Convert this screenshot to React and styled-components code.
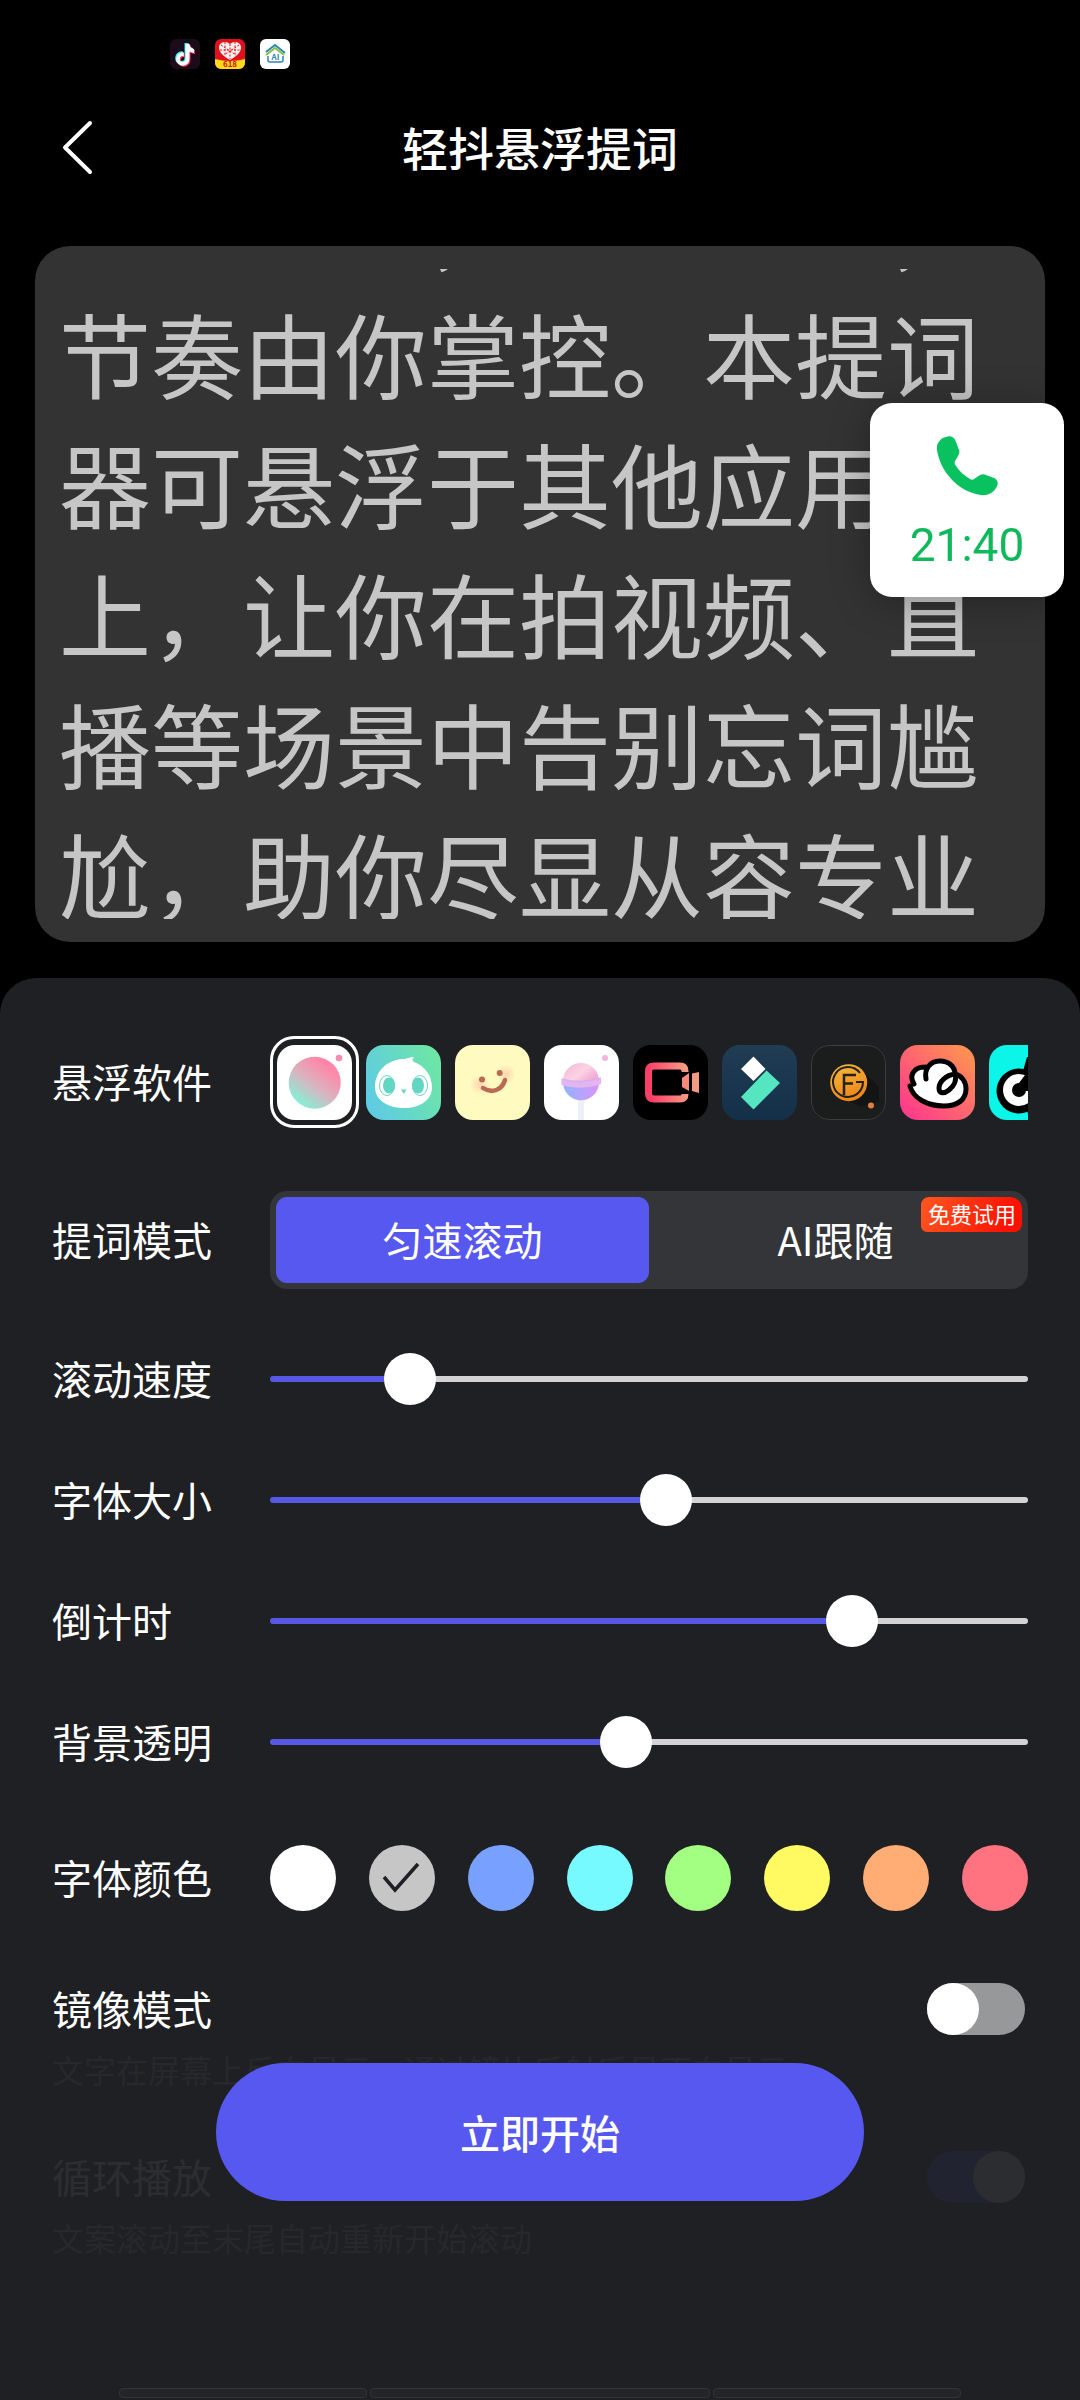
import React, { useState } from 'react';
import styled, { createGlobalStyle } from 'styled-components';

const GlobalStyle = createGlobalStyle`
    * {
        box-sizing: border-box;
    }

    body {
        margin: 0;
        background: #000;
        color: #fff;
        font-family: "Noto Sans CJK SC", "Noto Sans", sans-serif;
    }

    button, input {
        margin: 0;
        padding: 0;
        border: none;
        font-family: inherit;
        color: inherit;
    }
`;

const Page = styled.div`
    min-height: 100vh;
    display: flex;
    flex-direction: column;
`;

const StatusBar = styled.div`
    height: 84px;
    padding: 39px 170px 0;
    display: flex;
    gap: 15px;
`;

const StatusIcon = styled.svg`
    width: 30px;
    height: 30px;
`;

const Header = styled.header`
    height: 128px;
    padding: 0 52px;
    display: grid;
    grid-template-columns: 52px 1fr 52px;
    align-items: center;
`;

const BackButton = styled.button`
    width: 52px;
    height: 60px;
    background: none;
`;

const Title = styled.h1`
    margin: 0;
    padding-bottom: 4px;
    font-size: 46px;
    line-height: 60px;
    font-weight: 500;
    text-align: center;
`;

const Preview = styled.section`
    margin: 34px 35px 36px;
    padding: 23px 23px 23px 24px;
    border-radius: 35px;
    background: #333;
`;

const PreviewViewport = styled.div`
    height: 650px;
    overflow: hidden;
`;

const Script = styled.p`
    margin: -112px 0 0;
    font-size: 92px;
    line-height: 130px;
    color: #c6c6c6;
    text-spacing-trim: space-all;
`;

const CallBubble = styled.button`
    position: fixed;
    top: 403px;
    right: 16px;
    width: 194px;
    height: 194px;
    padding-top: 22px;
    display: flex;
    flex-direction: column;
    align-items: center;
    gap: 12px;
    border-radius: 22px;
    background: #fff;
    box-shadow: 0 4px 40px rgba(0, 0, 0, 0.3);
    color: #10b85c;
    font-family: Roboto, "Noto Sans", sans-serif;
    font-size: 46px;
    line-height: 60px;
`;

const Sheet = styled.main`
    flex: 1;
    padding: 58px 52px 140px;
    border-radius: 36px 36px 0 0;
    background: #1f2023;
`;

const Row = styled.div`
    display: flex;
    align-items: center;
    min-height: ${({ $height }) => $height}px;
    margin-top: ${({ $gap }) => $gap || 0}px;
`;

const Label = styled.label`
    flex: 0 0 218px;
    padding-bottom: 2px;
    font-size: 40px;
    line-height: 50px;
`;

const AppList = styled.div`
    flex: 1;
    min-width: 0;
    display: flex;
    overflow: hidden;
`;

const AppButton = styled.button`
    flex: 0 0 89px;
    height: 92px;
    display: flex;
    align-items: center;
    justify-content: center;
    border: 3px solid ${({ $selected }) => ($selected ? '#fff' : 'transparent')};
    border-radius: 24px;
    background: none;
`;

const AppTile = styled.svg`
    flex: none;
    width: 75px;
    height: 75px;
    border-radius: 18px;
`;

const Segment = styled.div`
    position: relative;
    flex: 1;
    height: 98px;
    padding: 6px;
    display: flex;
    border-radius: 17px;
    background: #343539;
`;

const SegmentButton = styled.button`
    flex: 1;
    padding-bottom: 2px;
    border-radius: 11px;
    background: ${({ $active }) => ($active ? '#5758f0' : 'transparent')};
    font-size: 40px;
    line-height: 50px;
`;

const Badge = styled.span`
    position: absolute;
    top: 6px;
    right: 6px;
    padding: 0 6px 2px 7px;
    border-radius: 8px 12px 8px 6px;
    background: linear-gradient(110deg, #ff5722, #ff1100 85%);
    font-size: 22px;
    line-height: 33px;
`;

const Sliders = styled.div`
    margin-top: 29px;
`;

const Range = styled.input.attrs({ type: 'range' })`
    flex: 1;
    min-width: 0;
    height: 52px;
    appearance: none;
    background: none;

    &::-webkit-slider-runnable-track {
        height: 6px;
        border-radius: 3px;
        background: linear-gradient(#5758e6, #5758e6) 0 0 / var(--fill) 100% no-repeat, #d3d3d5;
    }

    &::-webkit-slider-thumb {
        appearance: none;
        width: 52px;
        height: 52px;
        margin-top: -23px;
        border-radius: 50%;
        background: #fff;
    }
`;

const Swatches = styled.div`
    flex: 1;
    display: flex;
    justify-content: space-between;
`;

const Swatch = styled.label`
    width: 66px;
    height: 66px;
    display: grid;
    place-items: center;
    border-radius: 50%;
    background: ${({ $color }) => $color};

    input {
        appearance: none;
        grid-area: 1 / 1;
    }

    svg {
        grid-area: 1 / 1;
    }
`;

const Switch = styled.input.attrs({ type: 'checkbox', role: 'switch' })`
    appearance: none;
    width: 98px;
    height: 52px;
    margin: 0 3px 0 auto;
    display: flex;
    justify-content: flex-start;
    border-radius: 26px;
    background: #97989a;

    &::before {
        content: '';
        width: 52px;
        height: 52px;
        border-radius: 50%;
        background: #fff;
    }

    &:checked {
        justify-content: flex-end;
        background: #5758f0;
    }
`;

const Hint = styled.p`
    margin: 14px 0 0;
    padding-bottom: 2px;
    font-size: 32px;
    line-height: 40px;
    color: #a0a1a3;
`;

const Footer = styled.footer`
    position: fixed;
    left: 0;
    right: 0;
    bottom: 0;
    height: 357px;
    padding-top: 20px;
    display: flex;
    flex-direction: column;
    align-items: center;
    justify-content: space-between;
    background: rgba(31, 32, 35, 0.94);
`;

const StartButton = styled.button`
    width: 60%;
    height: 138px;
    border-radius: 69px;
    background: #5758f0;
    font-size: 40px;
    font-weight: 500;
`;

const NavHints = styled.div`
    width: 78%;
    margin-bottom: 2px;
    display: grid;
    grid-template-columns: 249fr 340fr 249fr;
    gap: 3px;
`;

const NavHint = styled.span`
    height: 10px;
    border: 1px solid #333437;
    border-radius: 4px;
    background: #242528;
`;

const notePath = 'M16 5h4c.3 3 2 4.600 4.500 5v4c-1.800 0-3.300-.5-4.500-1.400V20a6.700 6.700 0 1 1-6.700-6.700l1 .1v4a2.800 2.800 0 1 0 1.700 2.600z';

const cloudPath = 'M26 34C24 24 30 16 40 16c9 0 15 6 15 13 7 2 11 8 11 15 0 11-9 17-22 17-17 0-31-8-34-20M14 39C9 31 13 22 25 22M55 29c-9 1-16 8-16 14 0 6 5 6 10 2 5-4 8-10 6-16';

const StatusIcons = () => (
    <>
        <StatusIcon viewBox="0 0 30 30">
            <rect width="30" height="30" rx="6" fill="#1c0b18" />
            <path d={notePath} fill="#25f4ee" transform="translate(-1.500 -1)" />
            <path d={notePath} fill="#fe2c55" transform="translate(0.500 1)" />
            <path d={notePath} fill="#fff" transform="translate(-.5 0)" />
        </StatusIcon>
        <StatusIcon viewBox="0 0 30 30">
            <rect width="30" height="30" rx="6" fill="#e0101c" />
            <path d="M0 20q15 4 30 0v4a6 6 0 0 1-6 6H6a6 6 0 0 1-6-6z" fill="#ffd91c" />
            <path d="M15 21C8 17 4 13 4 8.500 4 3 11 1 15 5c4-4 11-2 11 3.500C26 13 22 17 15 21z" fill="#fff0ee" />
            <path d="M15 5v15M6 6l15 10M24 6L9 16M5 11h20M10 3v14M20 3v14" stroke="#e0101c" strokeWidth="1" strokeDasharray="2 1.500" fill="none" />
            <text x="15" y="28" fontSize="8" fontWeight="700" textAnchor="middle" fill="#c8141c">618</text>
        </StatusIcon>
        <StatusIcon viewBox="0 0 30 30">
            <rect width="30" height="30" rx="6" fill="#fff" />
            <path d="M6 13l9-7 10 8" fill="none" stroke="#2f86b5" strokeWidth="2" />
            <path d="M6 16l9-7 9 7" fill="none" stroke="#8abf45" strokeWidth="2" />
            <path d="M8 17v4q0 2 2 2h11q2 0 2-2v-4" fill="none" stroke="#2f86b5" strokeWidth="1.500" />
            <text x="15.500" y="20.500" fontSize="8" fontWeight="700" textAnchor="middle" fill="#2f86b5">AI</text>
        </StatusIcon>
    </>
);

const apps = [
    {
        name: '轻颜',
        art: (
            <>
                <linearGradient id="ball" x1="0.8" y1="0.1" x2="0.2" y2="0.9">
                    <stop offset="0.1" stopColor="#ff86a8" />
                    <stop offset="0.55" stopColor="#d9b4c0" />
                    <stop offset="1" stopColor="#84f0d6" />
                </linearGradient>
                <rect width="75" height="75" fill="#fff" />
                <circle cx="37.7" cy="37.7" r="26" fill="url(#ball)" />
                <circle cx="62" cy="13" r="3.300" fill="#f58bb0" />
            </>
        ),
    },
    {
        name: '无他',
        art: (
            <>
                <linearGradient id="mint" x1="0" y1="0.7" x2="1" y2="0.3">
                    <stop stopColor="#5fcbe4" />
                    <stop offset="1" stopColor="#6de6a6" />
                </linearGradient>
                <rect width="75" height="75" fill="url(#mint)" />
                <path d="M9 42C9 27 20 15 37 14c4 0 6-2 11-2-2 2-2 4 0 5 11 4 18 14 18 25 0 14-13 21-28 21S9 56 9 42z" fill="#fff" />
                <ellipse cx="21" cy="40.500" rx="7.500" ry="10" fill="none" stroke="#62d6c3" strokeWidth="1" />
                <ellipse cx="54" cy="40.500" rx="7.500" ry="10" fill="none" stroke="#62d6c3" strokeWidth="1" />
                <ellipse cx="23" cy="40.500" rx="6" ry="8" fill="#62d6c3" />
                <ellipse cx="52" cy="40.500" rx="6" ry="8" fill="#62d6c3" />
                <path d="M35 44.500h5.500L37.800 49z" fill="#62d6c3" />
            </>
        ),
    },
    {
        name: '微笑',
        art: (
            <>
                <radialGradient id="blush">
                    <stop stopColor="#ffb09a" stopOpacity="0.5" />
                    <stop offset="1" stopColor="#ffb09a" stopOpacity="0" />
                </radialGradient>
                <rect width="75" height="75" fill="#fffac0" />
                <circle cx="25" cy="40" r="10" fill="url(#blush)" />
                <circle cx="51" cy="29" r="10" fill="url(#blush)" />
                <circle cx="27" cy="34.500" r="3" fill="#b86a52" />
                <circle cx="44.700" cy="28" r="3" fill="#b86a52" />
                <path d="M28 43c9 6 19 2 22-8" fill="none" stroke="#b86a52" strokeWidth="4.500" strokeLinecap="round" />
            </>
        ),
    },
    {
        name: '棒棒糖',
        art: (
            <>
                <linearGradient id="candyTop" x1="0" y1="0" x2="1" y2="0.6">
                    <stop stopColor="#f3b6da" />
                    <stop offset="0.6" stopColor="#fbd3e2" />
                    <stop offset="1" stopColor="#f4a9d6" />
                </linearGradient>
                <linearGradient id="candyBottom">
                    <stop stopColor="#8fb4ff" />
                    <stop offset="1" stopColor="#da93fb" />
                </linearGradient>
                <rect width="75" height="75" fill="#fff" />
                <path d="M34 54h6v21h-6z" fill="#eef0f8" />
                <circle cx="37" cy="37.300" r="18" fill="url(#candyBottom)" />
                <path d="M19 36a18 18 0 0 1 36 0z" fill="url(#candyTop)" />
                <path d="M17.500 34q19.500 5 39.500-1v6q-20 7-39.500 1z" fill="#e4b4ee" />
                <path d="M17.500 34q19.500 5 39.500-1" fill="none" stroke="#c9b0f3" strokeWidth="1" />
                <circle cx="61" cy="13" r="3" fill="#f3b4dc" />
            </>
        ),
    },
    {
        name: '录屏',
        art: (
            <>
                <linearGradient id="rec" x1="0" y1="0.3" x2="1" y2="0.2">
                    <stop stopColor="#fb3d68" />
                    <stop offset="1" stopColor="#f59a83" />
                </linearGradient>
                <rect width="75" height="75" fill="#000" />
                <path d="M52 27v-1q0-5-5-5H21q-5.500 0-5.500 5.500v22Q15.500 54 21 54h26q5 0 5-5" fill="none" stroke="url(#rec)" strokeWidth="7" />
                <path d="M49 33l7-5v18l-7-4z" fill="#f58b78" />
                <path d="M59 28.500l7-1.500v21l-7-2z" fill="#f59a83" />
            </>
        ),
    },
    {
        name: '喵影',
        art: (
            <>
                <linearGradient id="navy" x1="0" y1="0" x2="0" y2="1">
                    <stop stopColor="#213d54" />
                    <stop offset="1" stopColor="#142f48" />
                </linearGradient>
                <rect width="75" height="75" fill="url(#navy)" />
                <path d="M31.500 11.500L43.500 24 31.500 36 19 24z" fill="#fff" />
                <path d="M44.500 25.500L58 38 31.500 64.500 19 52z" fill="#55e6c1" />
            </>
        ),
    },
    {
        name: 'FGO',
        art: (
            <>
                <linearGradient id="gold" x1="0.3" y1="0" x2="0.7" y2="1">
                    <stop stopColor="#f2b63a" />
                    <stop offset="1" stopColor="#ee8216" />
                </linearGradient>
                <rect x="0.500" y="0.500" width="74" height="74" rx="18" fill="#1b1d1d" stroke="#3d3e40" />
                <path d="M52 26l16 16v14L50 62 34 54z" fill="#131515" />
                <circle cx="37.700" cy="37.700" r="18.500" fill="url(#gold)" />
                <path d="M49 28a15 15 0 1 0 3 9h-7" fill="none" stroke="#26201a" strokeWidth="2" />
                <path d="M33 50V30h12M33 38.500h9" fill="none" stroke="#26201a" strokeWidth="2.500" />
                <circle cx="60" cy="60.500" r="3" fill="#e2803a" />
            </>
        ),
    },
    {
        name: '云剪',
        art: (
            <>
                <linearGradient id="coral" x1="0" y1="1" x2="1" y2="0">
                    <stop stopColor="#ff3391" />
                    <stop offset="1" stopColor="#ff9a4c" />
                </linearGradient>
                <rect width="75" height="75" fill="url(#coral)" />
                <path d="M14 39C9 31 13 22 25 24C27 18 33 16 40 16c9 0 15 6 15 13 7 2 11 8 11 15 0 11-9 17-22 17-17 0-31-8-34-20z" fill="#fff" />
                <path d={cloudPath} fill="none" stroke="#000" strokeWidth="5" strokeLinecap="round" />
            </>
        ),
    },
    {
        name: '抖音',
        art: (
            <>
                <rect width="75" height="75" fill="#0cf5e9" />
                <path d="M34 26l4-14h19v54l-18 4z" fill="#000" />
                <circle cx="30" cy="46" r="22.500" fill="#000" />
                <circle cx="30" cy="45" r="16" fill="#fff" />
                <path d="M39 18h9v27h-9z" fill="#fff" />
                <circle cx="30" cy="45" r="7" fill="#000" />
                <path d="M30 38l9-12v20h-4z" fill="#000" />
            </>
        ),
    },
];

const colors = ['#ffffff', '#c6c6c6', '#77a0ff', '#76faff', '#a2ff82', '#fffa62', '#ffad74', '#ff7280'];

const modes = ['匀速滚动', 'AI跟随'];

const Slider = ({ id, label, initial }) => {
    const [value, setValue] = useState(initial);
    const fill = `calc(26px + (100% - 52px) * ${value / 1000})`;

    return (
        <Row $height={121}>
            <Label htmlFor={id}>{label}</Label>
            <Range
                id={id}
                min="0"
                max="1000"
                value={value}
                onChange={(e) => setValue(Number(e.target.value))}
                style={{ '--fill': fill }}
            />
        </Row>
    );
};

const App = () => {
    const [selectedApp, setSelectedApp] = useState(0);
    const [mode, setMode] = useState(0);
    const [color, setColor] = useState(1);
    const [mirror, setMirror] = useState(false);
    const [loop, setLoop] = useState(true);

    return (
        <Page>
            <GlobalStyle />
            <StatusBar>
                <StatusIcons />
            </StatusBar>
            <Header>
                <BackButton aria-label="返回">
                    <svg width="52" height="60" viewBox="0 0 52 60" fill="none" stroke="#fff" strokeWidth="4" strokeLinecap="round" strokeLinejoin="round">
                        <path d="M38 5L13 29.500 38 54" />
                    </svg>
                </BackButton>
                <Title>轻抖悬浮提词</Title>
            </Header>

            <Preview>
                <PreviewViewport>
                    <Script>
                        {'\u3000\u3000\u3000\u3000，\u3000\u3000\u3000\u3000，'}
                        节奏由你掌控。本提词器可悬浮于其他应用之上，让你在拍视频、直播等场景中告别忘词尴尬，助你尽显从容专业
                    </Script>
                </PreviewViewport>
            </Preview>

            <Sheet>
                <Row $height={92}>
                    <Label as="span">悬浮软件</Label>
                    <AppList>
                        {apps.map((app, i) => (
                            <AppButton key={app.name} aria-label={app.name} $selected={i === selectedApp} onClick={() => setSelectedApp(i)}>
                                <AppTile viewBox="0 0 75 75">{app.art}</AppTile>
                            </AppButton>
                        ))}
                    </AppList>
                </Row>

                <Row $height={98} $gap={63}>
                    <Label as="span">提词模式</Label>
                    <Segment>
                        {modes.map((name, i) => (
                            <SegmentButton key={name} $active={i === mode} onClick={() => setMode(i)}>
                                {name}
                            </SegmentButton>
                        ))}
                        <Badge>免费试用</Badge>
                    </Segment>
                </Row>

                <Sliders>
                    <Slider id="speed" label="滚动速度" initial={161} />
                    <Slider id="size" label="字体大小" initial={524} />
                    <Slider id="countdown" label="倒计时" initial={788} />
                    <Slider id="opacity" label="背景透明" initial={467} />
                </Sliders>

                <Row $height={66} $gap={43}>
                    <Label as="span">字体颜色</Label>
                    <Swatches>
                        {colors.map((value, i) => (
                            <Swatch key={value} $color={value}>
                                <input type="radio" name="color" aria-label={value} checked={i === color} onChange={() => setColor(i)} />
                                {i === color && (
                                    <svg width="40" height="34" viewBox="0 0 40 34" fill="none" stroke="#1f2023" strokeWidth="3.500">
                                        <path d="M2 16l11 13L36 3" />
                                    </svg>
                                )}
                            </Swatch>
                        ))}
                    </Swatches>
                </Row>

                <Row $height={52} $gap={72}>
                    <Label htmlFor="mirror">镜像模式</Label>
                    <Switch id="mirror" checked={mirror} onChange={() => setMirror(!mirror)} />
                </Row>
                <Hint>文字在屏幕上反向显示，通过镜片反射后呈正向显示</Hint>

                <Row $height={52} $gap={60}>
                    <Label htmlFor="loop">循环播放</Label>
                    <Switch id="loop" checked={loop} onChange={() => setLoop(!loop)} />
                </Row>
                <Hint>文案滚动至末尾自动重新开始滚动</Hint>
            </Sheet>

            <CallBubble>
                <svg width="78" height="78" viewBox="0 0 78 78" fill="#0ac160">
                    <path d="M18 12c5-2 9 1 10 5l3 8c1 2 0 4-1 6l-3 5c-1 2 0 4 1 5 4 6 9 10 14 13 2 1 3 1 4 0l6-4c2-1 4-1 6 0l8 3c4 2 5 6 2 10-3 5-9 8-15 7C30 67 12 46 9 25c-1-6 3-12 9-13z" />
                </svg>
                21:40
            </CallBubble>

            <Footer>
                <StartButton>立即开始</StartButton>
                <NavHints>
                    <NavHint />
                    <NavHint />
                    <NavHint />
                </NavHints>
            </Footer>
        </Page>
    );
};

export default App;
